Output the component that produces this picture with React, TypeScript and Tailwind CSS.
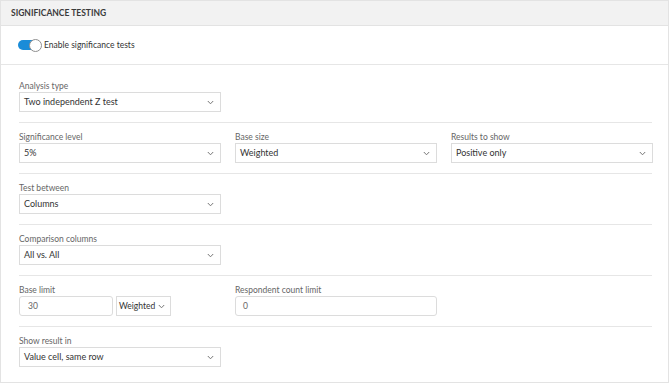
import React from "react"

const font = { fontFamily: "Lato, 'Noto Sans', sans-serif" }

function Chevron() {
  return (
    <svg width="7" height="5" viewBox="0 0 7 5" className="shrink-0">
      <path d="M0.8 1 L3.5 3.8 L6.2 1" fill="none" stroke="#777" strokeWidth="1" />
    </svg>
  )
}

function Select({ value, width = "w-[202px]", pad = "pl-[4px] pr-[6px]", size = "text-[9px]" }: { value: string; width?: string; pad?: string; size?: string }) {
  return (
    <div className={`${width} ${pad} ${size} h-[20px] border border-[#dcdcdc] bg-white flex items-center justify-between text-[#333]`}>
      <span>{value}</span>
      <Chevron />
    </div>
  )
}

function Label({ children }: { children: React.ReactNode }) {
  return <div className="h-[11px] leading-[11px] text-[8.5px] text-[#666]">{children}</div>
}

function Field({ label, value }: { label: string; value: string }) {
  return (
    <div className="flex flex-col">
      <Label>{label}</Label>
      <Select value={value} />
    </div>
  )
}

export default function App() {
  return (
    <div className="w-[670px] h-[384px] bg-white" style={font}>
      <div className="w-[669px] h-[383px] border border-[#e3e3e3] bg-white flex flex-col">
        <div className="h-[25px] bg-[#f2f2f2] border-b border-[#e3e3e3] flex items-center pl-[10px] text-[8.5px] font-bold text-[#3a3a3a]">
          SIGNIFICANCE TESTING
        </div>

        <div className="h-[39px] border-b border-[#e6e6e6] flex items-center pl-[17px] gap-[2px]">
          <div className="relative w-[24px] h-[13px]">
            <div className="absolute left-0 top-[1.5px] w-[21px] h-[10px] rounded-full bg-[#1a8cd8]" />
            <div className="absolute left-[11px] top-0 w-[13px] h-[13px] rounded-full bg-white border border-[#8f8f8f]" />
          </div>
          <span className="text-[8.5px] text-[#333]">Enable significance tests</span>
        </div>

        <div className="pl-[18px] pr-[16px] flex flex-col">
          <div className="pt-[16px] pb-[10px] border-b border-[#e6e6e6]">
            <Field label="Analysis type" value="Two independent Z test" />
          </div>

          <div className="pt-[9px] pb-[10px] border-b border-[#e6e6e6] flex gap-[14px]">
            <Field label="Significance level" value="5%" />
            <Field label="Base size" value="Weighted" />
            <Field label="Results to show" value="Positive only" />
          </div>

          <div className="pt-[9px] pb-[10px] border-b border-[#e6e6e6]">
            <Field label="Test between" value="Columns" />
          </div>

          <div className="pt-[9px] pb-[10px] border-b border-[#e6e6e6]">
            <Field label="Comparison columns" value="All vs. All" />
          </div>

          <div className="pt-[9px] pb-[10px] border-b border-[#e6e6e6] flex gap-[14px]">
            <div className="flex flex-col w-[202px]">
              <Label>Base limit</Label>
              <div className="flex gap-[3px]">
                <div className="w-[94px] h-[20px] border border-[#dcdcdc] rounded-[3px] flex items-center pl-[8px] text-[8.5px] text-[#666]">
                  30
                </div>
                <Select value="Weighted" width="w-[55px]" pad="pl-[2px] pr-[5px]" size="text-[8.5px]" />
              </div>
            </div>
            <div className="flex flex-col">
              <Label>Respondent count limit</Label>
              <div className="w-[202px] h-[20px] border border-[#dcdcdc] rounded-[3px] flex items-center pl-[7px] text-[8.5px] text-[#666]">
                0
              </div>
            </div>
          </div>

          <div className="pt-[9px]">
            <Field label="Show result in" value="Value cell, same row" />
          </div>
        </div>
      </div>
    </div>
  )
}
